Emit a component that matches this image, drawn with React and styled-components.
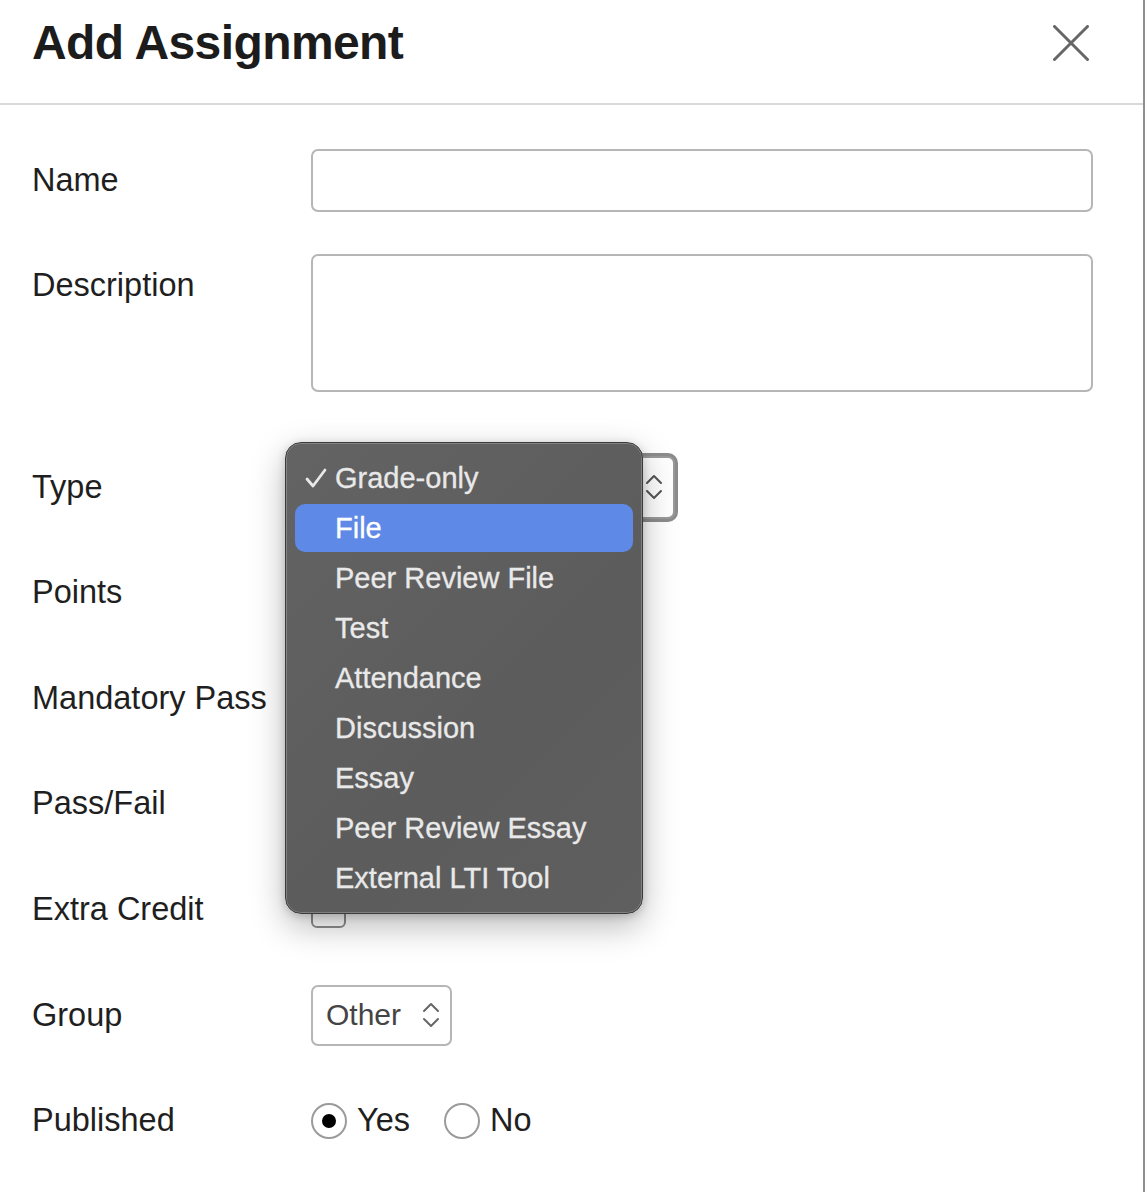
import styled, { createGlobalStyle } from 'styled-components';

const GlobalStyle = createGlobalStyle`
  html, body {
    margin: 0;
    padding: 0;
    background: #ffffff;
  }
  body {
    font-family: "Liberation Sans", Arial, sans-serif;
    color: #1f1f1f;
  }
`;

const Modal = styled.div`
  width: 1145px;
  min-height: 1192px;
  box-sizing: border-box;
  border-right: 2px solid #8f8f8f;
  background: #fff;
`;

const Header = styled.header`
  display: flex;
  align-items: flex-start;
  justify-content: space-between;
  height: 89px;
  padding: 14px 54px 0 32px;
  border-bottom: 2px solid #d9d9d9;
`;

const Title = styled.h1`
  margin: 0;
  font-size: 48px;
  line-height: 58px;
  font-weight: 700;
  letter-spacing: -0.6px;
  color: #1c1c1c;
`;

const CloseButton = styled.button`
  border: none;
  background: none;
  padding: 0;
  margin-top: 11px;
  width: 36px;
  height: 36px;
  cursor: pointer;
`;

const Form = styled.form`
  display: flex;
  flex-direction: column;
  gap: 42.6px;
  padding: 43.5px 0 0 32px;
`;

const Row = styled.div`
  display: grid;
  grid-template-columns: 279px 782px;
  align-items: ${p => (p.$top ? 'start' : 'center')};
  min-height: 63px;
  margin-bottom: ${p => p.$extra || 0}px;
`;

const Label = styled.label`
  display: flex;
  align-items: center;
  height: 63px;
  font-size: 32.5px;
  color: #1f1f1f;
  white-space: nowrap;
`;

const TextInput = styled.input`
  box-sizing: border-box;
  width: 782px;
  height: 63px;
  border: 2px solid #b6b6b6;
  border-radius: 7px;
  background: #fff;
  font: inherit;
  font-size: 30px;
  padding: 0 14px;
`;

const TextArea = styled.textarea`
  display: block;
  box-sizing: border-box;
  width: 782px;
  height: 138px;
  border: 2px solid #b6b6b6;
  border-radius: 7px;
  resize: none;
  font: inherit;
  font-size: 30px;
`;

const SelectWrap = styled.div`
  position: relative;
  width: ${p => p.$width}px;
  height: ${p => p.$height}px;
`;

const SelectBox = styled.div`
  box-sizing: border-box;
  display: flex;
  align-items: center;
  justify-content: space-between;
  width: 100%;
  height: 100%;
  padding: 0 10px 0 13px;
  border: 2px solid ${p => (p.$focused ? '#9a9a9a' : '#b6b6b6')};
  border-radius: 7px;
  background: #fff;
  box-shadow: ${p => (p.$focused ? '0 0 0 3px #8c8c8c' : 'none')};
  font-size: 30px;
  color: #444;
`;

const PointsInput = styled(TextInput)`
  width: 200px;
`;

const Checkbox = styled.span`
  display: block;
  box-sizing: border-box;
  width: 35px;
  height: 35px;
  margin-top: ${p => p.$offset || 0}px;
  border: 2px solid #8d8d8d;
  border-radius: 6px;
  background: #fff;
`;

const RadioGroup = styled.div`
  display: flex;
  align-items: center;
`;

const RadioOption = styled.label`
  display: flex;
  align-items: center;
  gap: 10px;
  margin-right: 34px;
  font-size: 32.5px;
  color: #1f1f1f;
`;

const RadioCircle = styled.span`
  display: flex;
  align-items: center;
  justify-content: center;
  box-sizing: border-box;
  width: 36px;
  height: 36px;
  border: 2px solid #9b9b9b;
  border-radius: 50%;
  background: #fff;

  &::after {
    content: '';
    display: ${p => (p.$checked ? 'block' : 'none')};
    width: 14px;
    height: 14px;
    border-radius: 50%;
    background: #000;
  }
`;

const Menu = styled.ul`
  position: absolute;
  left: -26px;
  top: -13.5px;
  z-index: 10;
  display: flex;
  flex-direction: column;
  gap: 2px;
  box-sizing: border-box;
  width: 358px;
  margin: 0;
  padding: 11px 9px;
  list-style: none;
  border-radius: 16px;
  background: linear-gradient(135deg, #636363 0%, #5c5c5c 60%, #5f5f5f 100%);
  border: 1px solid #3b3b3b;
  box-shadow: inset 0 0 0 1px rgba(255, 255, 255, 0.22), 0 12px 34px rgba(0, 0, 0, 0.28), 0 2px 8px rgba(0, 0, 0, 0.18);
`;

const MenuItem = styled.li`
  position: relative;
  display: flex;
  align-items: center;
  height: 48px;
  padding-left: 40px;
  border-radius: 10px;
  background: ${p => (p.$active ? '#5e89e6' : 'transparent')};
  color: ${p => (p.$active ? '#ffffff' : '#e9e9e9')};
  font-size: 29px;
  -webkit-text-stroke: 0.3px currentColor;
`;

const Check = styled.svg`
  position: absolute;
  left: 10px;
  top: 14px;
`;

function Chevrons({ color = '#666' }) {
  return (
    <svg width="18" height="30" viewBox="0 0 18 30" fill="none" stroke={color} strokeWidth="2" strokeLinecap="round" strokeLinejoin="round">
      <path d="M2 11 L9 4 L16 11" />
      <path d="M2 19 L9 26 L16 19" />
    </svg>
  );
}

const types = [
  'Grade-only',
  'File',
  'Peer Review File',
  'Test',
  'Attendance',
  'Discussion',
  'Essay',
  'Peer Review Essay',
  'External LTI Tool',
];

export default function App() {
  return (
    <>
      <GlobalStyle />
      <Modal>
        <Header>
          <Title>Add Assignment</Title>
          <CloseButton aria-label="Close">
            <svg width="36" height="36" viewBox="0 0 36 36" stroke="#666" strokeWidth="3" strokeLinecap="round">
              <path d="M1.5 1.5 L34.5 34.5" />
              <path d="M34.5 1.5 L1.5 34.5" />
            </svg>
          </CloseButton>
        </Header>

        <Form>
          <Row>
            <Label>Name</Label>
            <TextInput type="text" />
          </Row>

          <Row $top $extra={21}>
            <Label>Description</Label>
            <TextArea />
          </Row>

          <Row>
            <Label>Type</Label>
            <SelectWrap $width={364} $height={63}>
              {/* the open menu covers the current value */}
              <SelectBox $focused>
                <span />
                <Chevrons color="#555" />
              </SelectBox>
              <Menu>
                {types.map((t, i) => (
                  <MenuItem key={t} $active={t === 'File'}>
                    {i === 0 && (
                      <Check width="22" height="20" viewBox="0 0 22 20" fill="none" stroke="#e8e8e8" strokeWidth="2.8" strokeLinecap="round" strokeLinejoin="round">
                        <path d="M2 11 L8 18 L20 2" />
                      </Check>
                    )}
                    {t}
                  </MenuItem>
                ))}
              </Menu>
            </SelectWrap>
          </Row>

          <Row>
            <Label>Points</Label>
            <PointsInput type="text" />
          </Row>

          <Row>
            <Label>Mandatory Pass</Label>
            <Checkbox />
          </Row>

          <Row>
            <Label>Pass/Fail</Label>
            <Checkbox />
          </Row>

          <Row>
            <Label>Extra Credit</Label>
            <Checkbox $offset={2} />
          </Row>

          <Row>
            <Label>Group</Label>
            <SelectWrap $width={141} $height={61}>
              <SelectBox>
                <span>Other</span>
                <Chevrons />
              </SelectBox>
            </SelectWrap>
          </Row>

          <Row>
            <Label>Published</Label>
            <RadioGroup>
              <RadioOption>
                <RadioCircle $checked />
                Yes
              </RadioOption>
              <RadioOption>
                <RadioCircle />
                No
              </RadioOption>
            </RadioGroup>
          </Row>
        </Form>
      </Modal>
    </>
  );
}
